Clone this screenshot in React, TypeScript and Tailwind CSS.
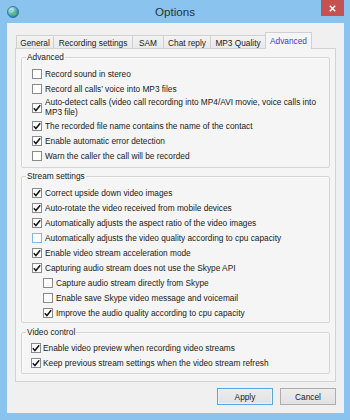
import React from "react";

function Box({ checked, hover }: { checked?: boolean; hover?: boolean }) {
  return (
    <span
      className={`flex h-[10px] w-[10px] shrink-0 items-center justify-center border bg-white ${
        hover ? "border-[#86b6e4]" : "border-[#8a8a8a]"
      }`}
    >
      {checked && (
        <svg width="8" height="8" viewBox="0 0 8 8">
          <path d="M0.8 4.3 L2.9 6.5 L7.2 1.2" fill="none" stroke="#151515" strokeWidth="1.5" />
        </svg>
      )}
    </span>
  );
}

function Row({
  checked,
  hover,
  indent,
  tight,
  children,
}: {
  checked?: boolean;
  hover?: boolean;
  indent?: boolean;
  tight?: boolean;
  children: React.ReactNode;
}) {
  return (
    <div
      className={`flex h-[15px] items-center ${tight ? "gap-[2px]" : "gap-[3px]"} ${
        indent ? "pl-[11px]" : ""
      }`}
    >
      <Box checked={checked} hover={hover} />
      <span className="whitespace-nowrap">{children}</span>
    </div>
  );
}

function Group({ title, className, children }: { title: string; className: string; children: React.ReactNode }) {
  return (
    <fieldset className={`rounded-[2px] border border-[#d5d5d5] px-[4px] shadow-[inset_1px_1px_0_#fafafa] ${className}`}>
      <legend className="px-[1px] leading-[10px]">{title}</legend>
      {children}
    </fieldset>
  );
}

const tabs: [string, string][] = [
  ["General", "w-[37px]"],
  ["Recording settings", "w-[79px]"],
  ["SAM", "w-[31px]"],
  ["Chat reply", "w-[47px]"],
  ["MP3 Quality", "w-[55px]"],
];

export default function App() {
  return (
    <div className="flex h-[420px] w-[350px] flex-col bg-[#8bc3ef] font-['Liberation_Sans',Arial,sans-serif] text-[8.3px] leading-[10px] text-[#1a1a1a]">
      {/* Title bar */}
      <div className="flex h-[23px] shrink-0">
        <div className="w-[29px] pl-[7px] pt-[6px]">
          <svg width="12" height="12" viewBox="0 0 12 12">
            <defs>
              <radialGradient id="g" cx="0.35" cy="0.3" r="0.8">
                <stop offset="0" stopColor="#d8f2fb" />
                <stop offset="0.45" stopColor="#5cb6dc" />
                <stop offset="1" stopColor="#1d6d9c" />
              </radialGradient>
            </defs>
            <circle cx="6" cy="6" r="5.5" fill="url(#g)" stroke="#3d6478" strokeWidth="0.8" />
            <path d="M6.5 6.2 C7.8 5.6 9.6 6.4 9.8 7.6 C9.2 9.2 7.6 9.9 6.6 9.4 C6.2 8.4 5.8 7.2 6.5 6.2 Z" fill="#5fbf4a" />
            <path d="M2.6 4.6 C3.4 3.6 4.8 3.4 5.4 4.2 C4.8 5 3.6 5.4 2.6 4.6 Z" fill="#7fcf6a" />
          </svg>
        </div>
        <div className="flex flex-1 items-center justify-center pt-[1px] text-[11.6px] text-[#243340]">Options</div>
        <div className="flex w-[29px] justify-start">
          <div className="flex h-[16px] w-[23px] items-center justify-center bg-[#c75050]">
            <svg width="7" height="7" viewBox="0 0 7 7">
              <path d="M0.8 0.8 L6.2 6.2 M6.2 0.8 L0.8 6.2" stroke="#fff" strokeWidth="1.5" />
            </svg>
          </div>
        </div>
      </div>

      {/* Client area */}
      <div className="ml-[7px] mr-[6px] flex h-[390px] flex-col bg-[#f0f0f0] px-[8px] pt-[9px]">
        {/* Tabs */}
        <div className="flex h-[16px] items-end pl-[1px]">
          {tabs.map(([t, w]) => (
            <div
              key={t}
              className={`flex h-[13px] items-center justify-center border-l border-t border-[#d0d0d0] bg-gradient-to-b from-[#f3f3f3] to-[#e9e9e9] pt-[1px] ${w}`}
            >
              {t}
            </div>
          ))}
          <div className="relative z-10 -mb-px flex h-[17px] w-[47px] items-center justify-center border border-b-0 border-[#d0d0d0] bg-[#f5f5f5] pb-[1px] text-[#3c3cd6]">
            Advanced
          </div>
        </div>

        {/* Panel */}
        <div className="flex h-[334px] flex-col border border-[#d3d3d3] bg-[#f5f5f5] px-[5px] pt-[3px]">
          <Group title="Advanced" className="pb-[4px]">
            <div className="pl-[6px] pt-[4px]">
              <Row>Record sound in stereo</Row>
              <Row>Record all calls’ voice into MP3 files</Row>
              <div className="flex h-[22px] items-start gap-[3px] pt-[1px]">
                <div className="flex h-[20px] items-center pt-[2px]">
                  <Box checked />
                </div>
                <span className="whitespace-nowrap">
                  Auto-detect calls (video call recording into MP4/AVI movie, voice calls into
                  <br />
                  MP3 file)
                </span>
              </div>
              <Row checked>The recorded file name contains the name of the contact</Row>
              <Row checked>Enable automatic error detection</Row>
              <Row>Warn the caller the call will be recorded</Row>
            </div>
          </Group>

          <Group title="Stream settings" className="mt-[3px] pb-[2px]">
            <div className="pl-[6px] pt-[4px]">
              <Row checked>Correct upside down video images</Row>
              <Row checked>Auto-rotate the video received from mobile devices</Row>
              <Row checked>Automatically adjusts the aspect ratio of the video images</Row>
              <Row hover>Automatically adjusts the video quality according to cpu capacity</Row>
              <Row checked>Enable video stream acceleration mode</Row>
              <Row checked>Capturing audio stream does not use the Skype API</Row>
              <Row indent>Capture audio stream directly from Skype</Row>
              <Row indent>Enable save Skype video message and voicemail</Row>
              <Row indent checked>
                Improve the audio quality according to cpu capacity
              </Row>
            </div>
          </Group>

          <Group title="Video control" className="mt-[4px] pb-[3px]">
            <div className="pl-[5px] pt-[3px]">
              <Row checked tight>
                Enable video preview when recording video streams
              </Row>
              <Row checked tight>
                Keep previous stream settings when the video stream refresh
              </Row>
            </div>
          </Group>
        </div>

        {/* Buttons */}
        <div className="mt-[6px] flex justify-end gap-[7px]">
          <button className="flex h-[17px] w-[56px] items-center justify-center border border-[#5fa3df] bg-gradient-to-b from-[#ececec] to-[#e2e2e2] shadow-[inset_0_0_0_1px_#e8f2fb]">
            Apply
          </button>
          <button className="flex h-[17px] w-[56px] items-center justify-center border border-[#adadad] bg-gradient-to-b from-[#ececec] to-[#e2e2e2]">
            Cancel
          </button>
        </div>
      </div>
    </div>
  );
}
